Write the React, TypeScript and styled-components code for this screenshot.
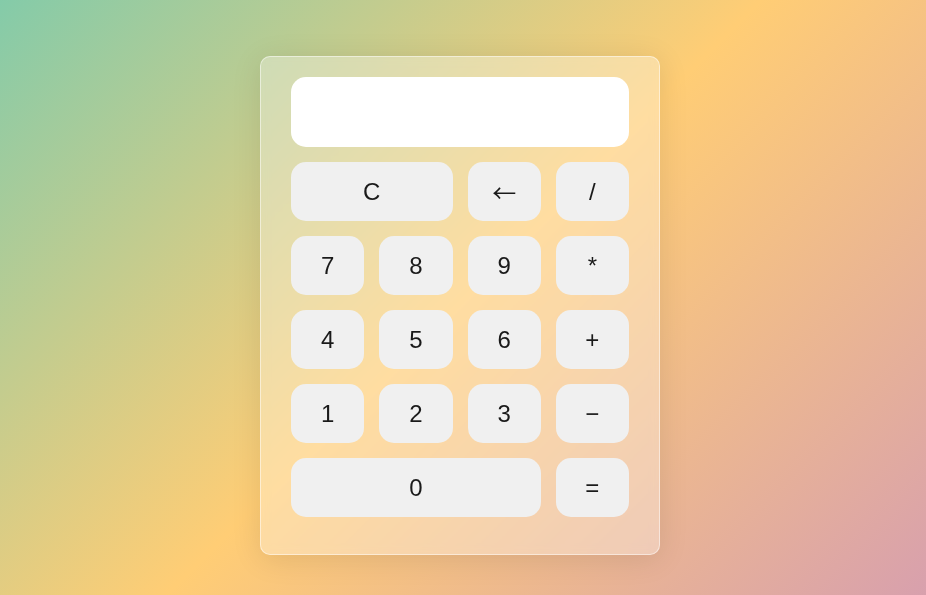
import React from "react";
import styled, { createGlobalStyle } from "styled-components";

const Global = createGlobalStyle`
  html, body { margin: 0; padding: 0; }
  body {
    font-family: "Liberation Sans", Arial, sans-serif;
  }
`;

const Page = styled.div`
  width: 926px;
  height: 595px;
  box-sizing: border-box;
  padding: 56px 6px 0 0;
  display: flex;
  justify-content: center;
  align-items: flex-start;
  background: linear-gradient(135deg, #84cba9 0%, #ffcd75 50%, #d8a0ad 100%);
`;

const Card = styled.div`
  width: 400px;
  box-sizing: border-box;
  padding: 20px 30px 37px;
  border-radius: 10px;
  background: rgba(255, 255, 255, 0.32);
  border: 1px solid rgba(255, 255, 255, 0.5);
  box-shadow: 0 4px 30px rgba(0, 0, 0, 0.1);
  backdrop-filter: blur(5px);
`;

const Display = styled.div`
  height: 70px;
  border-radius: 15px;
  background: #ffffff;
  margin-bottom: 15px;
`;

const Keys = styled.div`
  display: grid;
  grid-template-columns: repeat(4, 1fr);
  grid-auto-rows: 59px;
  gap: 15px;
`;

const Key = styled.button<{ $span?: number; $symbol?: boolean }>`
  grid-column: span ${(p) => p.$span ?? 1};
  border: none;
  border-radius: 15px;
  background: #f0f0f0;
  color: #1a1a1a;
  font-family: ${(p) =>
    p.$symbol
      ? `"Noto Sans CJK JP", "DejaVu Sans", sans-serif`
      : `"Liberation Sans", Arial, sans-serif`};
  font-size: 24px;
  line-height: 1;
  display: flex;
  align-items: center;
  justify-content: center;
  padding: 0;
  cursor: pointer;
`;

const keys: { label: string; span?: number; symbol?: boolean }[] = [
  { label: "C", span: 2 },
  { label: "←", symbol: true },
  { label: "/" },
  { label: "7" },
  { label: "8" },
  { label: "9" },
  { label: "*" },
  { label: "4" },
  { label: "5" },
  { label: "6" },
  { label: "+" },
  { label: "1" },
  { label: "2" },
  { label: "3" },
  { label: "−" },
  { label: "0", span: 3 },
  { label: "=" },
];

export default function App() {
  return (
    <>
      <Global />
      <Page>
        <Card>
          <Display />
          <Keys>
            {keys.map((k) => (
              <Key key={k.label} $span={k.span} $symbol={k.symbol}>
                {k.label}
              </Key>
            ))}
          </Keys>
        </Card>
      </Page>
    </>
  );
}
